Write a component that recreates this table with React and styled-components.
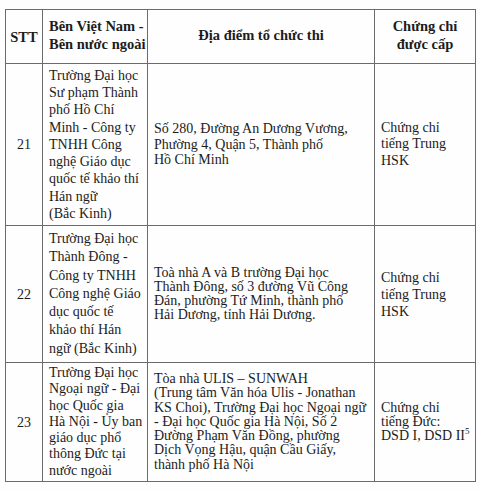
import React from 'react';
import styled, { createGlobalStyle } from 'styled-components';

const GlobalStyle = createGlobalStyle`
  html, body {
    margin: 0;
    padding: 0;
    background: #fefefe;
  }
  body {
    font-family: "Liberation Serif", "Times New Roman", serif;
    color: #1c1c1c;
  }
`;

const Page = styled.div`
  padding: 9px 0 0 5px;
`;

const Table = styled.table`
  border-collapse: collapse;
  table-layout: fixed;
  width: 470px;
  font-size: 14px;
`;

const Col = styled.col`
  width: ${p => p.$w}px;
`;

const Row = styled.tr`
  height: ${p => p.$h}px;
`;

const HeadCell = styled.th`
  border: 1px solid #6b6b6b;
  padding: 0 6px;
  font-weight: bold;
  font-size: 14.5px;
  line-height: 18px;
  text-align: ${p => p.$align || 'center'};
  vertical-align: middle;
  padding-bottom: 4px;
`;

const Cell = styled.td`
  border: 1px solid #6b6b6b;
  padding: 0 4px 0 6px;
  vertical-align: middle;
  text-align: ${p => p.$align || 'left'};
  line-height: ${p => p.$lh || 17}px;
`;

const Line = styled.span`
  display: block;
  white-space: nowrap;
`;

const Sup = styled.sup`
  font-size: 9px;
  line-height: 0;
  vertical-align: 6px;
`;

const rows = [
  {
    no: '21',
    h: 162,
    side: { lh: 17.3, lines: ['Trường Đại học', 'Sư phạm Thành', 'phố Hồ Chí', 'Minh - Công ty', 'TNHH Công', 'nghệ Giáo dục', 'quốc tế khảo thí', 'Hán ngữ', '(Bắc Kinh)'] },
    place: { lh: 15.8, lines: ['Số 280, Đường An Dương Vương,', 'Phường 4, Quận 5, Thành phố', 'Hồ Chí Minh'] },
    cert: { lh: 16.2, lines: ['Chứng chỉ', 'tiếng Trung', 'HSK'] },
  },
  {
    no: '22',
    h: 137,
    side: { lh: 18.3, lines: ['Trường Đại học', 'Thành Đông  -', 'Công ty TNHH', 'Công nghệ Giáo', 'dục quốc tế', 'khảo thí Hán', 'ngữ (Bắc Kinh)'] },
    place: { lh: 13.9, lines: ['Toà nhà A và B trường Đại học', 'Thành Đông, số 3 đường Vũ Công', 'Đán, phường Tứ Minh, thành phố', 'Hải Dương, tỉnh Hải Dương.'] },
    cert: { lh: 17, lines: ['Chứng chỉ', 'tiếng Trung', 'HSK'] },
  },
  {
    no: '23',
    h: 119,
    side: { lh: 16.3, lines: ['Trường Đại học', 'Ngoại ngữ - Đại', 'học Quốc gia', 'Hà Nội - Ủy ban', 'giáo dục phổ', 'thông Đức tại', 'nước ngoài'] },
    place: { lh: 14.2, lines: ['Tòa nhà ULIS – SUNWAH', '(Trung tâm Văn hóa Ulis - Jonathan', 'KS Choi), Trường Đại học Ngoại ngữ', '- Đại học Quốc gia Hà Nội, Số 2', 'Đường Phạm Văn Đồng, phường', 'Dịch Vọng Hậu, quận Cầu Giấy,', 'thành phố Hà Nội'] },
    cert: { lh: 14.2, lines: ['Chứng chỉ', 'tiếng Đức:', <>DSD I, DSD II<Sup>5</Sup></>] },
  },
];

const Lines = ({ lines }) => lines.map((l, i) => <Line key={i}>{l}</Line>);

const App = () => (
  <Page>
    <GlobalStyle />
    <Table>
      <colgroup>
        <Col $w={37} />
        <Col $w={105} />
        <Col $w={227} />
        <Col $w={101} />
      </colgroup>
      <tbody>
        <Row $h={54}>
          <HeadCell style={{ padding: 0 }}>STT</HeadCell>
          <HeadCell $align="left" style={{ paddingLeft: 6 }}>
            <Line>Bên Việt Nam -</Line>
            <Line>Bên nước ngoài</Line>
          </HeadCell>
          <HeadCell>Địa điểm tổ chức thi</HeadCell>
          <HeadCell>
            <Line>Chứng chỉ</Line>
            <Line>được cấp</Line>
          </HeadCell>
        </Row>
        {rows.map(r => (
          <Row key={r.no} $h={r.h}>
            <Cell $align="center" style={{ padding: 0 }}>{r.no}</Cell>
            <Cell $lh={r.side.lh}><Lines lines={r.side.lines} /></Cell>
            <Cell $lh={r.place.lh}><Lines lines={r.place.lines} /></Cell>
            <Cell $lh={r.cert.lh}><Lines lines={r.cert.lines} /></Cell>
          </Row>
        ))}
      </tbody>
    </Table>
  </Page>
);

export default App;
